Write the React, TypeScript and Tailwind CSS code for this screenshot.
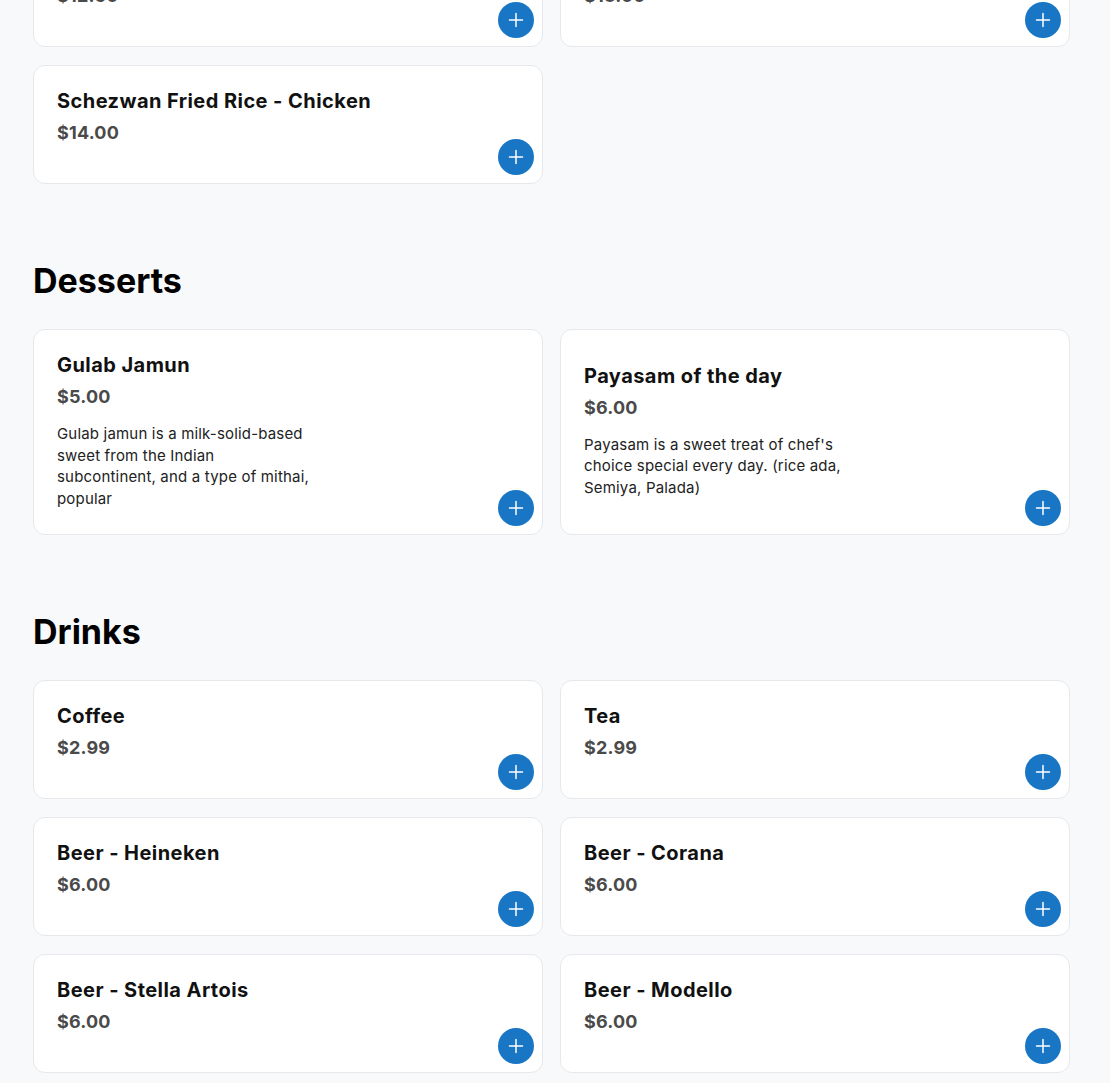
type Item = { name: string; price: string; desc?: string[] };

const prevRow: Item[] = [
  { name: "Schezwan Fried Rice - Veg", price: "$12.50" },
  { name: "Schezwan Fried Rice - Egg", price: "$13.00" },
];

const sections: { title: string; items: Item[] }[] = [
  {
    title: "Desserts",
    items: [
      {
        name: "Gulab Jamun",
        price: "$5.00",
        desc: [
          "Gulab jamun is a milk-solid-based",
          "sweet from the Indian",
          "subcontinent, and a type of mithai,",
          "popular",
        ],
      },
      {
        name: "Payasam of the day",
        price: "$6.00",
        desc: [
          "Payasam is a sweet treat of chef's",
          "choice special every day. (rice ada,",
          "Semiya, Palada)",
        ],
      },
    ],
  },
  {
    title: "Drinks",
    items: [
      { name: "Coffee", price: "$2.99" },
      { name: "Tea", price: "$2.99" },
      { name: "Beer - Heineken", price: "$6.00" },
      { name: "Beer - Corana", price: "$6.00" },
      { name: "Beer - Stella Artois", price: "$6.00" },
      { name: "Beer - Modello", price: "$6.00" },
    ],
  },
];

function PlusButton() {
  return (
    <button className="absolute bottom-2 right-2 flex h-9 w-9 items-center justify-center rounded-full bg-[#1976c5] text-white">
      <svg width="16" height="16" viewBox="0 0 16 16" fill="none" stroke="currentColor" strokeWidth="1.5" strokeLinecap="round">
        <path d="M8 1.5v13M1.5 8h13" />
      </svg>
    </button>
  );
}

function Card({ item }: { item: Item }) {
  return (
    <div className="relative flex items-center rounded-xl border border-[#e6e8eb] bg-white px-[23px] pt-[23px] pb-[25px]">
      <div>
        <h3 className="text-[20px] font-bold leading-6 tracking-[0.022em] text-[#111]">{item.name}</h3>
        <p className="mt-1.5 text-[18px] font-bold leading-7 tracking-[0.01em] text-[#4a4a4a]">{item.price}</p>
        {item.desc ? (
          <p className="mt-3 text-[15px] leading-[21.5px] tracking-[0.012em] text-[#222]">
            {item.desc.map((l, i) => (
              <span key={i} className="block">
                {l}
              </span>
            ))}
          </p>
        ) : (
          <div className="mt-[11px] h-0" />
        )}
      </div>
      <PlusButton />
    </div>
  );
}

export default function App() {
  return (
    <div className="min-h-[1083px] bg-[#f8f9fb] font-['Inter',sans-serif] overflow-hidden">
      <div className="ml-[33px] w-[1037px] pb-10">
        <div className="-mt-[72px] grid grid-cols-2 gap-x-[17px] gap-y-[18px]">
          {prevRow.map((it) => (
            <Card key={it.name} item={it} />
          ))}
        </div>
        <div className="mt-[18px] grid grid-cols-2 gap-x-[17px] gap-y-[18px]">
          <Card item={{ name: "Schezwan Fried Rice - Chicken", price: "$14.00" }} />
        </div>
        {sections.map((s) => (
          <section key={s.title} className="mt-[77px]">
            <h2 className="mb-[28px] text-[34px] font-bold leading-10 text-black">{s.title}</h2>
            <div className="grid grid-cols-2 gap-x-[17px] gap-y-[18px]">
              {s.items.map((it) => (
                <Card key={it.name} item={it} />
              ))}
            </div>
          </section>
        ))}
      </div>
    </div>
  );
}
